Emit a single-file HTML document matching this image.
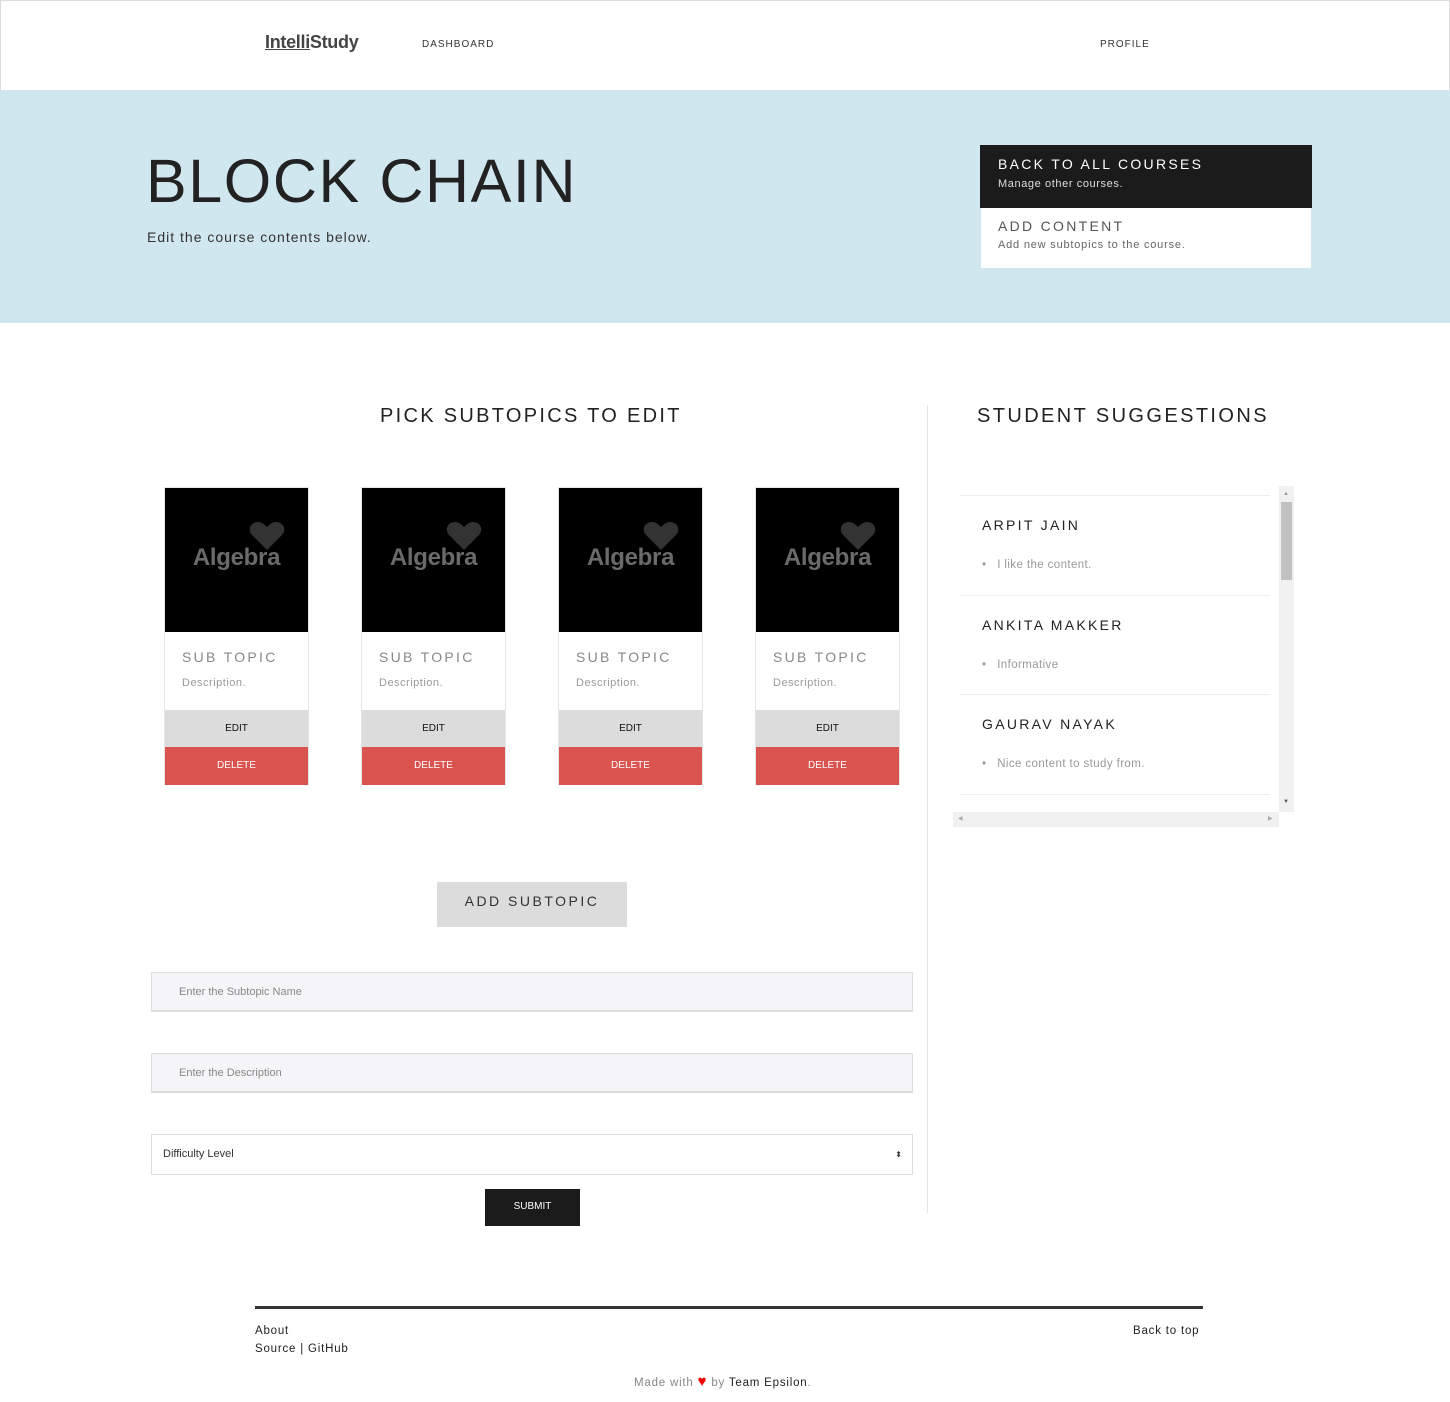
<!DOCTYPE html>
<html><head><meta charset="utf-8"><style>
*{margin:0;padding:0;box-sizing:border-box}
body{width:1450px;height:1402px;position:relative;background:#fff;font-family:"Liberation Sans",sans-serif;color:#222;overflow:hidden}
.a{position:absolute}
.card{position:absolute;top:487px;width:145px;height:298px;border:1px solid #e6e6e6;background:#fff}
.card .img{height:144px;background:#000;position:relative}
.card .img span{position:absolute;left:0;right:0;top:56px;text-align:center;font-weight:bold;font-size:24px;color:#6a6a6a;letter-spacing:-0.3px}
.card .img svg{position:absolute;left:84px;top:34px}
.card .t{position:absolute;left:17px;top:161px;font-size:14px;letter-spacing:2.3px;color:#888}
.card .d{position:absolute;left:17px;top:189px;font-size:11px;color:#999;letter-spacing:.5px}
.card .e{position:absolute;left:0;right:0;top:222px;height:37px;background:#dcdcdc;text-align:center;line-height:37px;font-size:10px;color:#111}
.card .x{position:absolute;left:0;right:0;top:259px;height:38px;background:#d9534f;text-align:center;line-height:38px;font-size:10px;color:#fff}
.sg{position:absolute;left:960px;width:310px;border-top:1px solid #eee}
.sg b{position:absolute;left:22px;top:21px;font-weight:normal;font-size:14px;letter-spacing:2.3px;color:#222}
.sg i{position:absolute;left:22px;top:63px;font-style:normal;font-size:11.5px;color:#999;letter-spacing:.4px}
.inp{position:absolute;left:151px;width:762px;height:40px;background:#f5f5f7;border:1px solid #ddd;border-bottom:2px solid #ddd;font-size:11px;color:#888;padding-left:27px;line-height:38px}
</style></head><body>
<div class="a" style="left:0;top:0;width:1450px;height:90px;border:1px solid #ddd;border-bottom:none"></div>
<div class="a" style="left:265px;top:32px;font-size:18px;font-weight:bold;color:#444;letter-spacing:-0.3px"><span style="text-decoration:underline">Intelli</span>Study</div>
<div class="a" style="left:422px;top:39px;font-size:10px;letter-spacing:1px;color:#333">DASHBOARD</div>
<div class="a" style="left:1100px;top:39px;font-size:10px;letter-spacing:1px;color:#333">PROFILE</div>
<div class="a" style="left:0;top:90px;width:1450px;height:233px;background:#d1e7ef"></div>
<div class="a" style="left:146px;top:146px;font-size:61px;letter-spacing:1.6px;color:#222">BLOCK CHAIN</div>
<div class="a" style="left:147px;top:229px;font-size:14px;letter-spacing:1px;color:#333">Edit the course contents below.</div>
<div class="a" style="left:980px;top:145px;width:332px;height:63px;background:#1b1b1b"></div>
<div class="a" style="left:998px;top:156px;font-size:14px;letter-spacing:2.3px;color:#fff">BACK TO ALL COURSES</div>
<div class="a" style="left:998px;top:178px;font-size:11px;letter-spacing:.6px;color:#ddd">Manage other courses.</div>
<div class="a" style="left:981px;top:208px;width:330px;height:60px;background:#fff"></div>
<div class="a" style="left:998px;top:218px;font-size:14px;letter-spacing:2.3px;color:#555">ADD CONTENT</div>
<div class="a" style="left:998px;top:239px;font-size:11px;letter-spacing:.8px;color:#666">Add new subtopics to the course.</div>
<div class="a" style="left:380px;top:405px;font-size:20px;letter-spacing:2.3px;color:#222">PICK SUBTOPICS TO EDIT</div>
<div class="a" style="left:977px;top:405px;font-size:20px;letter-spacing:2.4px;color:#222">STUDENT SUGGESTIONS</div>
<div class="a" style="left:927px;top:405px;width:1px;height:808px;background:#e5e5e5"></div>

<div class="card" style="left:164px"><div class="img"><svg width="36" height="28" viewBox="0 0 36 28"><path d="M18 28L3 13C-2 7 2 0 9 0c4 0 7 3 9 5 2-2 5-5 9-5 7 0 11 7 6 13z" fill="#333"/></svg><span>Algebra</span></div><div class="t">SUB TOPIC</div><div class="d">Description.</div><div class="e">EDIT</div><div class="x">DELETE</div></div>
<div class="card" style="left:361px"><div class="img"><svg width="36" height="28" viewBox="0 0 36 28"><path d="M18 28L3 13C-2 7 2 0 9 0c4 0 7 3 9 5 2-2 5-5 9-5 7 0 11 7 6 13z" fill="#333"/></svg><span>Algebra</span></div><div class="t">SUB TOPIC</div><div class="d">Description.</div><div class="e">EDIT</div><div class="x">DELETE</div></div>
<div class="card" style="left:558px"><div class="img"><svg width="36" height="28" viewBox="0 0 36 28"><path d="M18 28L3 13C-2 7 2 0 9 0c4 0 7 3 9 5 2-2 5-5 9-5 7 0 11 7 6 13z" fill="#333"/></svg><span>Algebra</span></div><div class="t">SUB TOPIC</div><div class="d">Description.</div><div class="e">EDIT</div><div class="x">DELETE</div></div>
<div class="card" style="left:755px"><div class="img"><svg width="36" height="28" viewBox="0 0 36 28"><path d="M18 28L3 13C-2 7 2 0 9 0c4 0 7 3 9 5 2-2 5-5 9-5 7 0 11 7 6 13z" fill="#333"/></svg><span>Algebra</span></div><div class="t">SUB TOPIC</div><div class="d">Description.</div><div class="e">EDIT</div><div class="x">DELETE</div></div>

<div class="sg" style="top:495px;height:100px"><b>ARPIT JAIN</b><i>•&nbsp;&nbsp;&nbsp;I like the content.</i></div>
<div class="sg" style="top:595px;height:100px"><b>ANKITA MAKKER</b><i>•&nbsp;&nbsp;&nbsp;Informative</i></div>
<div class="sg" style="top:694px;height:100px"><b>GAURAV NAYAK</b><i>•&nbsp;&nbsp;&nbsp;Nice content to study from.</i></div>
<div class="a" style="left:960px;top:794px;width:310px;height:1px;background:#eee"></div>
<div class="a" style="left:1279px;top:486px;width:15px;height:326px;background:#f1f1f1"></div>
<div class="a" style="left:1281px;top:502px;width:11px;height:78px;background:#c1c1c1"></div>
<div class="a" style="left:1283px;top:491px;font-size:6px;color:#999">▲</div>
<div class="a" style="left:1283px;top:799px;font-size:6px;color:#555">▼</div>
<div class="a" style="left:953px;top:812px;width:326px;height:15px;background:#f1f1f1"></div>
<div class="a" style="left:958px;top:815px;font-size:6px;color:#aaa">◀</div>
<div class="a" style="left:1268px;top:815px;font-size:6px;color:#aaa">▶</div>

<div class="a" style="left:437px;top:882px;width:190px;height:45px;background:#dcdcdc;text-align:center;line-height:38px;font-size:14px;letter-spacing:2.5px;color:#333">ADD SUBTOPIC</div>
<div class="inp" style="top:972px">Enter the Subtopic Name</div>
<div class="inp" style="top:1053px">Enter the Description</div>
<div class="a" style="left:151px;top:1134px;width:762px;height:41px;border:1px solid #ddd;font-size:11px;color:#333;padding-left:11px;line-height:39px">Difficulty Level<span style="position:absolute;right:10px;font-size:8px">⬍</span></div>
<div class="a" style="left:485px;top:1189px;width:95px;height:37px;background:#1b1b1b;color:#fff;font-size:10px;text-align:center;line-height:35px">SUBMIT</div>

<div class="a" style="left:255px;top:1306px;width:948px;height:3px;background:#333"></div>
<div class="a" style="left:255px;top:1325px;font-size:11.5px;letter-spacing:.8px;color:#222">About</div>
<div class="a" style="left:255px;top:1343px;font-size:11.5px;letter-spacing:.8px;color:#222">Source | GitHub</div>
<div class="a" style="left:1133px;top:1325px;font-size:11.5px;letter-spacing:.8px;color:#222">Back to top</div>
<div class="a" style="left:634px;top:1373px;font-size:11.5px;letter-spacing:.8px;color:#888">Made with <span style="color:#e00;font-size:15px">♥</span> by <span style="color:#222">Team Epsilon</span>.</div>
</body></html>
